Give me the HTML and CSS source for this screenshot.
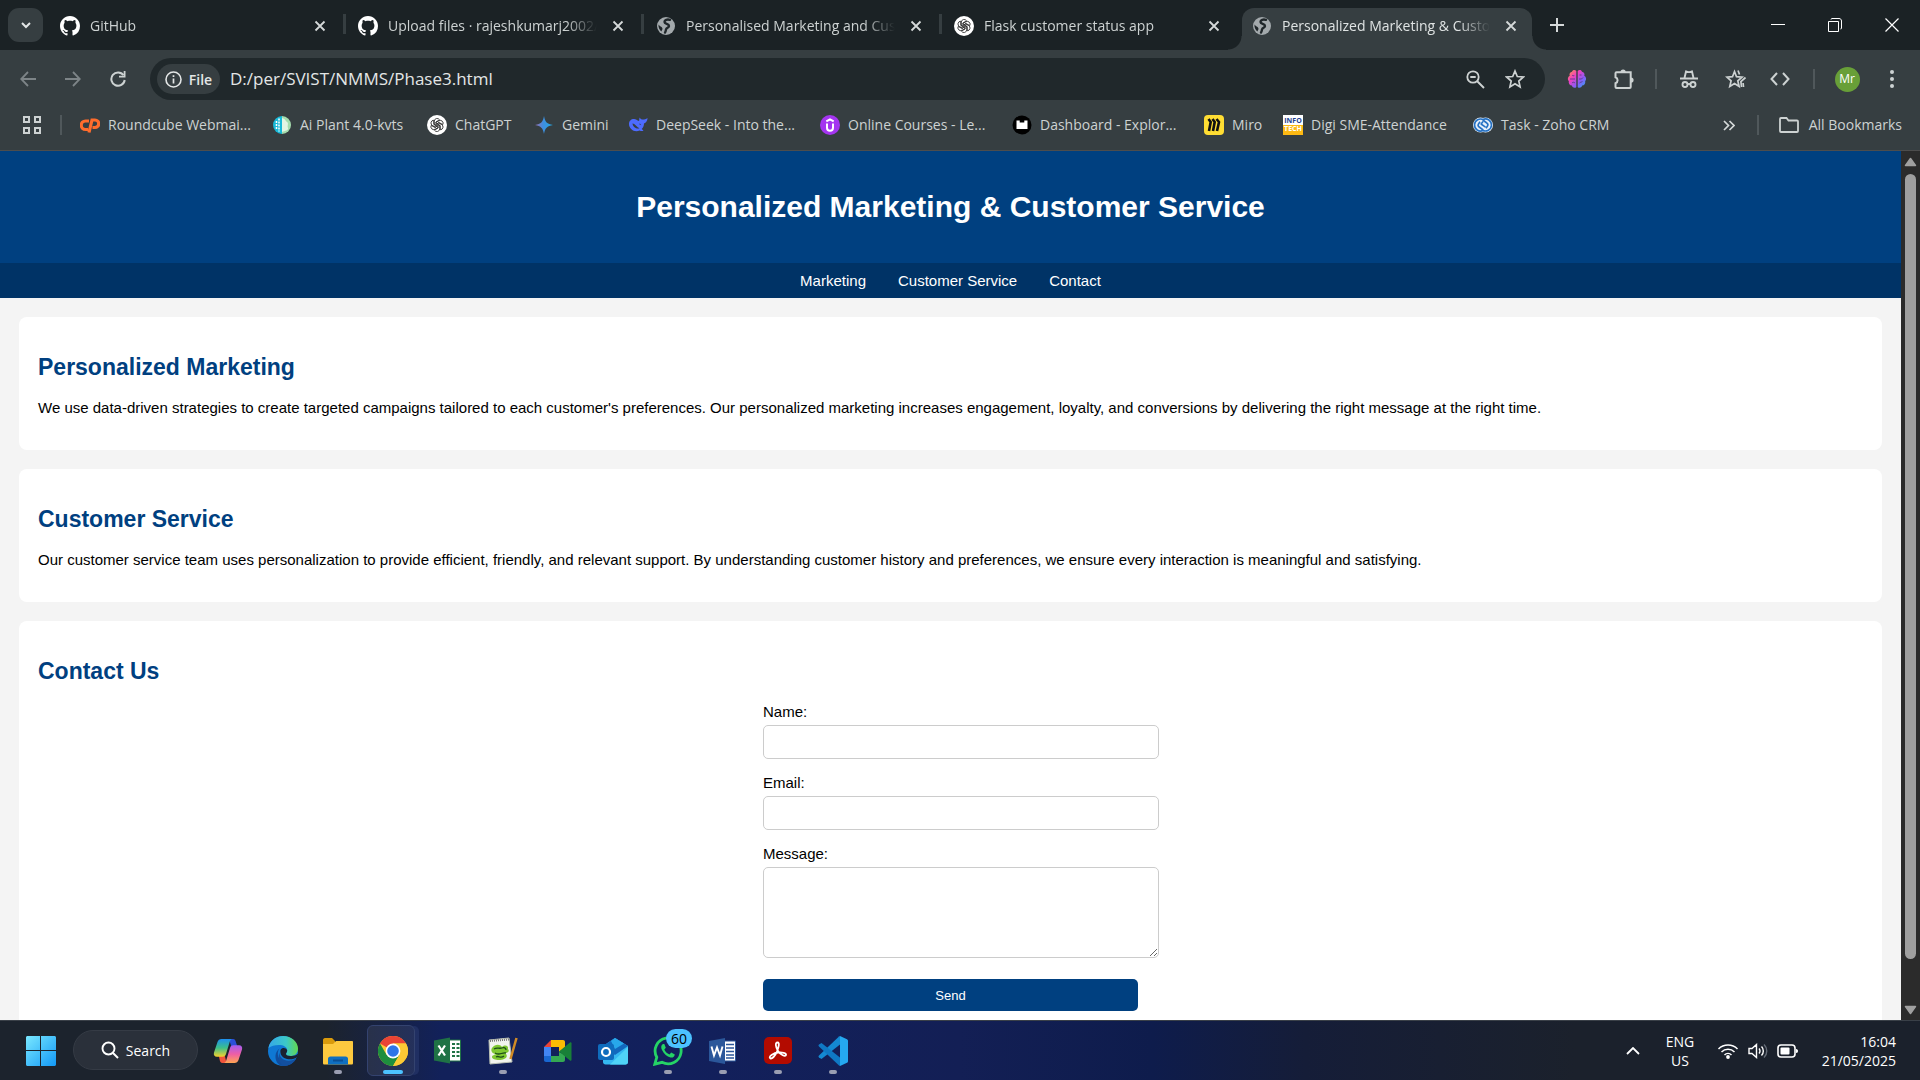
FILE: index.html
```html
<!DOCTYPE html>
<html lang="en">
<head>
<meta charset="utf-8">
<title>Personalized Marketing &amp; Customer Service</title>
<link rel="stylesheet" href="styles.css">
</head>
<body>
<svg class="defs" aria-hidden="true">
  <defs>
    <symbol id="github" viewBox="0 0 16 16"><path fill="#fff" d="M8 0C3.58 0 0 3.58 0 8c0 3.54 2.29 6.53 5.47 7.59.4.07.55-.17.55-.38 0-.19-.01-.82-.01-1.49-2.01.37-2.53-.49-2.69-.94-.09-.23-.48-.94-.82-1.13-.28-.15-.68-.52-.01-.53.63-.01 1.08.58 1.23.82.72 1.21 1.87.87 2.33.66.07-.52.28-.87.51-1.07-1.78-.2-3.64-.89-3.64-3.95 0-.87.31-1.59.82-2.15-.08-.2-.36-1.02.08-2.12 0 0 .67-.21 2.2.82.64-.18 1.32-.27 2-.27s1.36.09 2 .27c1.53-1.04 2.2-.82 2.2-.82.44 1.1.16 1.92.08 2.12.51.56.82 1.27.82 2.15 0 3.07-1.87 3.75-3.65 3.95.29.25.54.73.54 1.48 0 1.07-.01 1.93-.01 2.2 0 .21.15.46.55.38A8.01 8.01 0 0 0 16 8c0-4.42-3.58-8-8-8z"/></symbol>
    <symbol id="globe" viewBox="0 0 20 20"><circle cx="10" cy="10" r="9" fill="#a3a9ac"/><path fill="none" stroke="#20272a" stroke-width="2.400" stroke-linecap="round" d="M14 3.800c-3-.8-5.500.2-5.500 2.200 0 2.300 4.500 1.500 4.500 4 0 2-2.500 1.500-3 3.500-.3 1.200-.2 2-1 3"/><path fill="#20272a" d="M2.500 8.500c-.3 3 1 5.500 3 7 .2-1.500 1.500-2 .8-3.500C5.500 10.500 4 10.500 2.500 8.500z"/></symbol>
    <symbol id="openai" viewBox="0 0 20 20"><circle cx="10" cy="10" r="10" fill="#fff"/><g fill="none" stroke="#222" stroke-width=".8"><path d="M7.300 10.300V6.200a2.800 2.800 0 0 1 5.200-1.400L9 6.900v4.400"/><path d="M7.300 10.300V6.200a2.800 2.800 0 0 1 5.200-1.400L9 6.900v4.400" transform="rotate(60 10 10)"/><path d="M7.300 10.300V6.200a2.800 2.800 0 0 1 5.200-1.400L9 6.900v4.400" transform="rotate(120 10 10)"/><path d="M7.300 10.300V6.200a2.800 2.800 0 0 1 5.200-1.400L9 6.900v4.400" transform="rotate(180 10 10)"/><path d="M7.300 10.300V6.200a2.800 2.800 0 0 1 5.200-1.400L9 6.900v4.400" transform="rotate(240 10 10)"/><path d="M7.300 10.300V6.200a2.800 2.800 0 0 1 5.200-1.400L9 6.900v4.400" transform="rotate(300 10 10)"/></g></symbol>
    <symbol id="x" viewBox="0 0 12 12"><path d="M1.500 1.500l9 9M10.500 1.500l-9 9" stroke="currentColor" stroke-width="1.800"/></symbol>
  </defs>
</svg>

<header class="browser">
  <div class="tabstrip">
    <button class="tab-search" aria-label="Search tabs"><svg width="12" height="12" viewBox="0 0 12 12"><path d="M2 4l4 4 4-4" fill="none" stroke="#e3e6e6" stroke-width="2"/></svg></button>
    <div class="tabs">
      <div class="tab"><svg class="fav"><use href="#github"/></svg><span class="tab-title">GitHub</span><button class="close" aria-label="Close tab"><svg><use href="#x"/></svg></button></div>
      <div class="tab divided"><svg class="fav"><use href="#github"/></svg><span class="tab-title">Upload files · rajeshkumarj2002/</span><button class="close" aria-label="Close tab"><svg><use href="#x"/></svg></button></div>
      <div class="tab divided"><svg class="fav"><use href="#globe"/></svg><span class="tab-title">Personalised Marketing and Cus</span><button class="close" aria-label="Close tab"><svg><use href="#x"/></svg></button></div>
      <div class="tab divided"><svg class="fav"><use href="#openai"/></svg><span class="tab-title">Flask customer status app</span><button class="close" aria-label="Close tab"><svg><use href="#x"/></svg></button></div>
      <div class="tab active"><svg class="fav"><use href="#globe"/></svg><span class="tab-title">Personalized Marketing &amp; Custo</span><button class="close" aria-label="Close tab"><svg><use href="#x"/></svg></button></div>
    </div>
    <button class="new-tab" aria-label="New tab"><svg width="14" height="14" viewBox="0 0 14 14"><path d="M7 0v14M0 7h14" stroke="#d5d9d9" stroke-width="2"/></svg></button>
    <div class="window-controls">
      <button aria-label="Minimize"><svg width="14" height="14" viewBox="0 0 14 14"><path d="M0 6.500h14" stroke="#fff"/></svg></button>
      <button aria-label="Restore"><svg width="14" height="14" viewBox="0 0 14 14"><path d="M.5 3.500h10v10H.5zM3 1.500c0-.6.500-1 1-1h7c1.500 0 2.500 1 2.500 2.500v7c0 .8-.4 1-1 1" fill="none" stroke="#fff"/></svg></button>
      <button aria-label="Close"><svg width="14" height="14" viewBox="0 0 14 14"><path d="M.5.5l13 13M13.500.5l-13 13" stroke="#fff" stroke-width="1.200"/></svg></button>
    </div>
  </div>

  <div class="toolbar">
    <div class="nav-buttons">
      <button aria-label="Back"><svg width="16" height="16" viewBox="0 0 16 16"><path d="M16 8H1.500M8 1L1.200 8 8 15" fill="none" stroke="#7d8487" stroke-width="1.800"/></svg></button>
      <button aria-label="Forward"><svg width="16" height="16" viewBox="0 0 16 16"><path d="M0 8h14.500M8 1l6.800 7L8 15" fill="none" stroke="#7d8487" stroke-width="1.800"/></svg></button>
      <button aria-label="Reload"><svg width="16" height="16" viewBox="0 0 16 16"><path d="M13.500 4.200A6.700 6.700 0 1 0 14.700 9" fill="none" stroke="#cdd2d2" stroke-width="2"/><path d="M15.500 0v6.500H9V4.700h4.700V0z" fill="#cdd2d2"/></svg></button>
    </div>
    <div class="omnibox">
      <button class="chip"><svg width="17" height="17" viewBox="0 0 17 17"><circle cx="8.500" cy="8.500" r="7.500" fill="none" stroke="#e3e6e6" stroke-width="1.600"/><path d="M8.500 7.500v5M8.500 4.200v1.800" stroke="#e3e6e6" stroke-width="1.700"/></svg>File</button>
      <input class="url" aria-label="Address" value="D:/per/SVIST/NMMS/Phase3.html">
      <button class="omni-btn" aria-label="Zoom"><svg width="19" height="19" viewBox="0 0 19 19"><circle cx="7" cy="7" r="5.700" fill="none" stroke="#cdd2d2" stroke-width="1.800"/><path d="M11 11l7 7M4.300 7h5.400" stroke="#cdd2d2" stroke-width="1.900"/></svg></button>
      <button class="omni-btn" aria-label="Bookmark this tab"><svg width="20" height="20" viewBox="0 0 20 20"><path d="M10 2l2.300 5.500 6 .5-4.500 4 1.300 5.900L10 14.800l-5.100 3.100L6.200 12 1.700 8l6-.5z" fill="none" stroke="#cdd2d2" stroke-width="1.700"/></svg></button>
    </div>
    <div class="extensions">
      <button aria-label="Brain extension"><svg width="20" height="20" viewBox="0 0 20 20"><defs><linearGradient id="bg" x1="0" y1="0" x2="1" y2="1"><stop offset="0" stop-color="#ff9d3c"/><stop offset=".35" stop-color="#f03fc0"/><stop offset=".65" stop-color="#8a5cf6"/><stop offset="1" stop-color="#27a9f5"/></linearGradient></defs><g fill="url(#bg)"><path d="M9.300 2C8 .3 5.500.8 5 2.800 3 3 2 5 2.700 6.700.8 7.500.3 10.500 1.800 12c-.5 2.500 1 4.500 3 4.600C5.500 19 8.300 19.500 9.300 18zM10.700 2C12 .3 14.500.8 15 2.800c2 .2 3 2.200 2.300 3.900 1.900.8 2.400 3.800.9 5.300.5 2.500-1 4.500-3 4.600-.7 2.400-3.500 2.900-4.500 1.400z"/></g><path d="M3 10h5M5 6c1 1.200 2 .8 2.500 0M5 14c1-1.200 2-.8 3 0M12 10h2.500l1.500-1.500M12.500 6h2M12.500 14c1-1 2-.8 3-1.500" fill="none" stroke="#4a3a80" stroke-width=".8"/></svg></button>
      <button aria-label="Extensions"><svg width="22" height="22" viewBox="0 0 22 22"><path d="M2.500 5.200c0-.6.400-1 1-1h14.200V19c0 .6-.4 1-1 1H3.500c-.6 0-1-.4-1-1v-3.800a3.200 3.200 0 0 0 0-6z" fill="none" stroke="#cdd2d2" stroke-width="2"/><path d="M7.500 4a2.600 2.600 0 0 1 5.200 0zM18 9.500a2.600 2.600 0 0 1 0 5.200z" fill="#cdd2d2"/></svg></button>
      <i class="sep"></i>
      <button aria-label="Incognito"><svg width="20" height="20" viewBox="0 0 20 20" fill="none" stroke="#cdd2d2" stroke-width="1.900"><path d="M1 9.500h18M5.500 9L7 2.500c2 .8 4 .8 6 0L14.500 9"/><circle cx="6" cy="15.500" r="2.500"/><circle cx="14" cy="15.500" r="2.500"/><path d="M8.500 15h3"/></svg></button>
      <button aria-label="Favourites"><svg width="22" height="22" viewBox="0 0 22 22" fill="none" stroke="#cdd2d2" stroke-width="1.700"><path d="M9.500 3.500l2 5.200 5.500.4-4.200 3.700 1.300 5.700-4.600-3-4.700 3 1.300-5.700L2 9.100l5.500-.4zM13 2.500l1.500 4M16.500 19l-.6-5.500L20.500 9.500"/><path d="M18.500 19l-.4-4"/></svg></button>
      <button aria-label="Source"><svg width="20" height="14" viewBox="0 0 20 14"><path d="M7 1L1.500 7 7 13M13 1l5.500 6-5.500 6" fill="none" stroke="#cdd2d2" stroke-width="2"/></svg></button>
      <i class="sep"></i>
      <button aria-label="Profile"><span class="avatar">Mr</span></button>
      <button aria-label="Menu"><svg width="4" height="18" viewBox="0 0 4 18" fill="#cdd2d2"><circle cx="2" cy="2" r="2"/><circle cx="2" cy="9" r="2"/><circle cx="2" cy="16" r="2"/></svg></button>
    </div>
  </div>

  <nav class="bookmarks" aria-label="Bookmarks">
    <button class="apps" aria-label="Apps"><svg width="18" height="18" viewBox="0 0 18 18" fill="none" stroke="#cdd2d2" stroke-width="2"><path d="M1 1h5v5H1zM12 1h5v5h-5zM1 12h5v5H1zM12 12h5v5h-5z"/></svg></button>
    <i class="sep"></i>
    <div class="links">
      <a href="#"><svg viewBox="0 0 20 20" fill="none" stroke="#ff6c2c" stroke-width="3.200"><path d="M9 6H5.500a4 4 0 0 0 0 8.500H8M9 17.500L12 5h3a3.500 3.500 0 0 1 0 7.500h-2.500"/></svg>Roundcube Webmai...</a>
      <a href="#"><svg viewBox="0 0 20 20"><path d="M10 1a9 9 0 0 0 0 18z" fill="#18b9d8"/><path d="M10 1a9 9 0 0 1 0 18z" fill="#a5dcae"/><path d="M7 3.500v13M4.500 6v8" stroke="#fff" stroke-width="1.500" stroke-dasharray="2 1"/><path d="M10 3c4 1 3 3 5 4s0 4 1 6-3 3-6 4z" fill="#e3f5e4"/></svg>Ai Plant 4.0-kvts</a>
      <a href="#"><svg><use href="#openai"/></svg>ChatGPT</a>
      <a href="#"><svg viewBox="0 0 20 20"><defs><linearGradient id="gem" x1="0" x2="1"><stop offset="0" stop-color="#9a6fb0"/><stop offset=".45" stop-color="#3f8ee0"/><stop offset="1" stop-color="#23a8e0"/></linearGradient></defs><path d="M10 1c1 6 3 8 9 9-6 1-8 3-9 9-1-6-3-8-9-9 6-1 8-3 9-9z" fill="url(#gem)"/></svg>Gemini</a>
      <a href="#"><svg viewBox="0 0 20 20"><path d="M1 9c0-3 2-5 5-5 2 0 3 1.500 5 2 .5-1 0-2 .7-3.500.7 1.500 1.800 2 3 2C16.500 4.500 18 4 19.500 3c0 3-1.500 4.800-3.500 5.500 0 2.500-1 4.500-2.300 5.500l1.800 1.500c-1 .8-2.500.8-3.800 0C6.500 18 1 14 1 9z" fill="#4d6bfe"/><path d="M4.500 8.500c3 .2 4.500 4 7 4.700-2.500 1-6.500-.7-7-4.700zM11 9c1-.5 2 .3 2.200 1.300" fill="#363e41"/></svg>DeepSeek - Into the...</a>
      <a href="#"><svg viewBox="0 0 20 20"><circle cx="10" cy="10" r="10" fill="#a435f0"/><path d="M7 8.500v4.200a3 3 0 0 0 6 0V8.500M6.300 6.300L10 4.300l3.700 2" fill="none" stroke="#fff" stroke-width="2"/></svg>Online Courses - Le...</a>
      <a href="#"><svg viewBox="0 0 20 20"><circle cx="10" cy="10" r="9.500" fill="#000"/><path d="M4.500 5.500h3.200v2h4.600v-2h3.200v8.500h-11z" fill="#fff"/></svg>Dashboard - Explor...</a>
      <a href="#"><svg viewBox="0 0 20 20"><rect width="20" height="20" rx="4" fill="#ffdd33"/><path d="M4.500 4l2.200 3L5 16M8.500 4l2.200 3L9 16M12.500 4l2.500 3-2 9" fill="none" stroke="#111" stroke-width="2.600"/></svg>Miro</a>
      <a href="#"><svg viewBox="0 0 20 20"><path fill="#fff" d="M0 0h20v10H0z"/><path fill="#fdb913" d="M0 10h20v10H0z"/><text x="10" y="8" class="logo-info">INFO</text><text x="10" y="16" class="logo-tech">TECH</text></svg>Digi SME-Attendance</a>
      <a href="#"><svg viewBox="0 0 20 20"><circle cx="7.500" cy="10" r="7.500" fill="#e8f1fa"/><circle cx="12.500" cy="10" r="7.500" fill="#e8f1fa"/><g fill="none" stroke="#2672c4" stroke-width="1.600"><path d="M10.500 4.800A6 6 0 1 0 10 15.500M9.500 15.200A6 6 0 1 0 10 4.500"/><path d="M7 6.800L5.500 9c-.8 1.200-.3 2.300.7 3l4 3M13 13.200l1.500-2.200c.8-1.200.3-2.300-.7-3l-4-3M8 9l4.500 3.200M7.800 9.500L10 6.500"/></g></svg>Task - Zoho CRM</a>
    </div>
    <button class="more" aria-label="More bookmarks"><svg width="12" height="11" viewBox="0 0 12 11"><path d="M1 1l4.500 4.500L1 10M6.500 1L11 5.500 6.500 10" fill="none" stroke="#d5d9d9" stroke-width="1.700"/></svg></button>
    <i class="sep"></i>
    <a class="all" href="#"><svg width="20" height="16" viewBox="0 0 20 16"><path d="M1 14V2c0-.6.400-1 1-1h5.500l2 2.500H18c.6 0 1 .4 1 1V14c0 .6-.4 1-1 1H2c-.6 0-1-.4-1-1z" fill="none" stroke="#cdd2d2" stroke-width="1.800"/></svg>All Bookmarks</a>
  </nav>
</header>

<div class="viewport">
  <div class="page">
    <header class="page-header"><h1>Personalized Marketing &amp; Customer Service</h1></header>
    <nav class="page-nav">
      <a href="#marketing">Marketing</a>
      <a href="#service">Customer Service</a>
      <a href="#contact">Contact</a>
    </nav>
    <main>
      <section id="marketing">
        <h2>Personalized Marketing</h2>
        <p>We use data-driven strategies to create targeted campaigns tailored to each customer's preferences. Our personalized marketing increases engagement, loyalty, and conversions by delivering the right message at the right time.</p>
      </section>
      <section id="service">
        <h2>Customer Service</h2>
        <p>Our customer service team uses personalization to provide efficient, friendly, and relevant support. By understanding customer history and preferences, we ensure every interaction is meaningful and satisfying.</p>
      </section>
      <section id="contact">
        <h2>Contact Us</h2>
        <form>
          <label for="name">Name:</label>
          <input id="name" type="text">
          <label for="email">Email:</label>
          <input id="email" type="email">
          <label for="message">Message:</label>
          <textarea id="message"></textarea>
          <button type="button">Send</button>
        </form>
      </section>
    </main>
  </div>
  <div class="scrollbar" aria-hidden="true">
    <svg width="13" height="10" viewBox="0 0 13 10"><path d="M6.500 1.500l5 7h-10z" fill="#a0a0a0" stroke="#a0a0a0" stroke-width="1.500" stroke-linejoin="round"/></svg>
    <div class="thumb"></div>
    <svg width="13" height="10" viewBox="0 0 13 10"><path d="M6.500 8.500l5-7h-10z" fill="#a0a0a0" stroke="#a0a0a0" stroke-width="1.500" stroke-linejoin="round"/></svg>
  </div>
</div>

<footer class="taskbar">
  <button class="start" aria-label="Start"><svg width="30" height="30" viewBox="0 0 30 30"><defs><linearGradient id="win" x1="0" y1="0" x2="1" y2="1" gradientUnits="objectBoundingBox"><stop offset="0" stop-color="#7ae8ff"/><stop offset="1" stop-color="#1298f6"/></linearGradient></defs><path fill="url(#win)" d="M1.500 0H14v14H0V1.500C0 .7.700 0 1.500 0zM15 0h13.500c.8 0 1.500.7 1.500 1.500V14H15zM0 15h14v15H1.500C.7 30 0 29.300 0 28.500zM15 15h15v13.500c0 .8-.7 1.500-1.500 1.500H15z"/></svg></button>
  <button class="search"><svg width="18" height="18" viewBox="0 0 18 18"><circle cx="7.500" cy="7.500" r="6" fill="none" stroke="#fff" stroke-width="1.900"/><path d="M12 12l5 5" stroke="#fff" stroke-width="2"/></svg>Search</button>
  <div class="pinned">
    <button aria-label="Copilot"><svg viewBox="0 0 30 30"><defs><linearGradient id="cp1" x1="0" y1="0" x2="0" y2="1"><stop offset="0" stop-color="#1d8ff0"/><stop offset=".5" stop-color="#3cc08a"/><stop offset="1" stop-color="#f5d02c"/></linearGradient><linearGradient id="cp2" x1="0" y1="0" x2="0" y2="1"><stop offset="0" stop-color="#a35df0"/><stop offset=".5" stop-color="#ee5ea5"/><stop offset="1" stop-color="#ffa552"/></linearGradient></defs><path d="M16 3h4c2 0 2.500 1.500 3.200 4l1 3h-6z" fill="#2b4fd8"/><path d="M13.500 27h-4c-2 0-2.500-1.500-3-4l-.6-3h6z" fill="#f0543c"/><path d="M8.500 3H19c-1.500.5-2 1.500-2.500 3.500L13 18c-.6 2-1.500 2.700-3.500 2.700H4C1.500 20.700.3 19 1 16.500L4.500 6C5.200 4 6.500 3 8.500 3z" fill="url(#cp1)"/><path d="M21.500 27H11c1.500-.5 2-1.500 2.500-3.500L17 12c.6-2 1.500-2.700 3.500-2.700H26c2.500 0 3.700 1.700 3 4.200L25.500 24c-.7 2-2 3-4 3z" fill="url(#cp2)"/></svg></button>
    <button aria-label="Edge"><svg viewBox="0 0 30 30"><defs><linearGradient id="ed" x1="0" x2="1"><stop offset="0" stop-color="#35a8e8"/><stop offset=".6" stop-color="#3cc8c8"/><stop offset="1" stop-color="#62d84e"/></linearGradient></defs><circle cx="15" cy="15" r="15" fill="#0f78d4"/><path d="M.5 12C1.500 5 7.500 0 15 0c8.500 0 15 6 15 12.500 0 5-3.500 7.500-7.500 7.500-3 0-4.500-1-4.500-2 0-1 1.200-1.700 1.200-3.700C19.200 11 15.500 9 11 9 6.500 9 3 10 .5 12z" fill="url(#ed)"/><path d="M11.500 12.500C8 17 10 25 17 26.500c4 .9 8-.5 11.200-4C26 27 21 30 15.500 30 9.500 30 7 24 7.500 19.500c.3-3 2-5.500 4-7z" fill="#104c9c"/><path d="M12.500 14c-.8 4.500 2 8 6.500 9 4 .9 7.500-.3 10.300-2l1-3.500c-2 2-4.800 2.700-7.800 2.500-3 0-4.500-1-4.500-2 0-1 1.200-1.700 1.200-3.700-1.500-2.800-5-3-6.700-.3z" fill="#1a2130"/><path d="M11.500 16.500C11.300 23 19 27.500 28.200 22.500 26 27 21 30 15.500 30c-4-2.500-5.800-8.500-4-13.500z" fill="#124f9f"/></svg></button>
    <button aria-label="File Explorer"><svg viewBox="0 0 30 30"><path d="M0 4c0-1 .7-2 2-2h7l3 3v5H0z" fill="#d99a0c"/><path d="M0 8h10l3-3h16c.7 0 1 .5 1 1v21c0 1-.5 1.500-1.500 1.500h-27C.5 28.500 0 28 0 27z" fill="#fdc93f"/><path d="M5 28.500V23c0-1.500.8-2.500 2.500-2.500h15c1.700 0 2.500 1 2.500 2.500v5.500z" fill="#0f6fc0"/><path d="M10 24.500h10" stroke="#0a4f94" stroke-width="2"/></svg><i class="dot"></i></button>
    <button class="running" aria-label="Chrome"><svg viewBox="0 0 30 30"><circle cx="15" cy="15" r="15" fill="#fcc934"/><path d="M15 15L2 7.500A15 15 0 0 1 28 7.500H15z" fill="#ea4335"/><path d="M2 7.500A15 15 0 0 0 15 30l6.500-11.300L15 15l-6.500 3.700z" fill="#1e8e3e"/><path d="M15 7.500h13A15 15 0 0 1 15 30l6.500-11.300z" fill="#fcc934"/><circle cx="15" cy="15" r="7.400" fill="#fff"/><circle cx="15" cy="15" r="5.800" fill="#2f75e8"/></svg><i class="dot live"></i></button>
    <button aria-label="Excel"><svg viewBox="0 0 30 30"><path d="M15 4h12.500v21H15z" fill="#fff" stroke="#1f7245"/><path d="M19 8h3M23.500 8h3M19 12h3M23.500 12h3M19 16h3M23.500 16h3M19 20h3M23.500 20h3" stroke="#1f7245" stroke-width="2"/><path d="M1 4.500L17 1.500v26L1 24.500z" fill="#1f7245"/><path d="M5.500 9.500l6.500 10M12 9.500l-6.500 10" stroke="#fff" stroke-width="2.200"/></svg></button>
    <button aria-label="Notepad++"><svg viewBox="0 0 30 30"><path d="M1 4l20-2 3 24-22 2z" fill="#f2f4ee" stroke="#b9bfb2"/><path d="M2 5l19-1.500" stroke="#777" stroke-width="2" stroke-dasharray="1 1"/><path d="M4 12c3-4 8-4 10-1 3-3 7-1 6 2 2 2 0 4-3 4 3 2 2 5-1 6-4 2-12 1-12-2 0-2 3-2 4-3-3 0-6-3-4-6z" fill="#7fc832"/><path d="M6 13c3-2 5 0 8-1M14 12c2-1 4 0 4 2M7 17c4 3 7-1 11 0M8 21c3-2 4 2 8-1" fill="none" stroke="#1d4d18" stroke-width="1.300"/><path d="M28.500 2l-6 21" stroke="#d08a26" stroke-width="2.500"/></svg><i class="dot"></i></button>
    <button aria-label="Meet"><svg viewBox="0 0 30 30"><path d="M1 11l7-7v7z" fill="#ea4335"/><path d="M1 11h7v9H1z" fill="#4285f4"/><path d="M1 20h7v6H3c-1.200 0-2-.8-2-2z" fill="#1967d2"/><path d="M8 4h12c1.200 0 2 .8 2 2v5.500L16 16v-5H8z" fill="#fbbc04"/><path d="M8 26v-6h8v-4l6 3v5c0 1.200-.8 2-2 2z" fill="#34a853"/><path d="M16 15.500L27 6.500c.8-.6 1.500-.2 1.500.8v16.400c0 1-.7 1.400-1.500.8z" fill="#188038"/></svg></button>
    <button aria-label="Outlook"><svg viewBox="0 0 30 30"><path d="M5 10L17 2l13 8v16c0 1.500-1 2.500-2.500 2.500h-20C6 28.500 5 27.500 5 26z" fill="#35b8f1"/><path d="M5 10L17 2l13 8-13 9z" fill="#1268bd"/><path d="M13 5l4-3 9 5.500-9 5.500z" fill="#28a8ea"/><path d="M30 11v15c0 1.500-1 2.500-2.500 2.500H12z" fill="#4fd3f7"/><rect y="8" width="16" height="16" rx="2" fill="#0f6cbd"/><circle cx="8" cy="16" r="4" fill="none" stroke="#fff" stroke-width="2.200"/></svg></button>
    <button aria-label="WhatsApp"><svg viewBox="0 0 30 30"><path d="M1.800 28.200l2-7A13 13 0 1 1 9 26.300z" fill="none" stroke="#25d366" stroke-width="2.800"/><path d="M10 8c-2 1.200-2.300 3.500-1 6 2 4 5 6.500 8.500 7.500 2.200.5 4-.6 4.300-3l-3.600-2-1.700 2c-2.500-1-4.300-2.800-5.200-5l1.500-1.700L11.300 8z" fill="#25d366"/></svg><span class="badge">60</span><i class="dot"></i></button>
    <button aria-label="Word"><svg viewBox="0 0 30 30"><path d="M15 5h12.500v20H15z" fill="#fff" stroke="#2b579a"/><path d="M18 8.500h8M18 12h8M18 15.500h8M18 19h8M18 22h8" stroke="#2b579a" stroke-width="1.500"/><path d="M1 5l16-3v26L1 25z" fill="#2b579a"/><path d="M3.500 10.500L6 19.500l3-8 3 8 2.500-9" fill="none" stroke="#fff" stroke-width="1.900"/></svg><i class="dot"></i></button>
    <button aria-label="Acrobat"><svg viewBox="0 0 30 30"><rect x="1" y="1" width="28" height="27" rx="5" fill="#b30b00"/><path d="M7 22c-1.500-2 4-5 8-5.500s8.500.5 8 2.500-5.500 0-8-4S12 6.500 14.500 6.500s1 5-.5 9-5.500 8.500-7 6.500z" fill="none" stroke="#fff" stroke-width="1.800"/></svg><i class="dot"></i></button>
    <button aria-label="Visual Studio Code"><svg viewBox="0 0 30 30"><path d="M22 0l7 3.200c.7.400 1 .8 1 1.500v20.600c0 .7-.3 1.200-1 1.500L22 30z" fill="#25a8f0"/><path d="M22 0v8.500L3.500 23 1 21.500c-.7-.6-.7-1.300 0-2L21 .5z" fill="#1489d2"/><path d="M22 30v-8.500L3.500 7 1 8.500c-.7.600-.7 1.300 0 2L21 29.500z" fill="#0f78c4"/></svg><i class="dot"></i></button>
  </div>
  <div class="tray">
    <button aria-label="Show hidden icons"><svg width="14" height="8" viewBox="0 0 14 8"><path d="M1 7l6-6 6 6" fill="none" stroke="#fff" stroke-width="1.800"/></svg></button>
    <button class="lang">ENG<br>US</button>
    <button class="status" aria-label="Network, volume, battery">
      <svg width="22" height="16" viewBox="0 0 22 16"><g fill="none" stroke="#fff" stroke-width="1.500"><path d="M1.500 6a13.500 13.500 0 0 1 19 0M4.500 9a9.200 9.200 0 0 1 13 0M7.500 12a5 5 0 0 1 7 0"/></g><circle cx="11" cy="14" r="1.900" fill="#fff"/></svg>
      <svg width="20" height="16" viewBox="0 0 20 16" fill="none" stroke="#fff" stroke-width="1.400"><path d="M1 5.500h3L8.500 1.500v13L4 10.500H1zM11 5.500a4 4 0 0 1 0 5M13.500 3.500a6.500 6.500 0 0 1 0 9"/><path d="M16 1.500a9 9 0 0 1 0 13" stroke="#666d78"/></svg>
      <svg width="22" height="14" viewBox="0 0 22 14"><rect x="1" y="1" width="17" height="12" rx="3" fill="none" stroke="#fff" stroke-width="1.600"/><rect x="3.500" y="3.500" width="9" height="7" rx="1" fill="#fff"/><path d="M19 5c1.500 0 2 1 2 2s-.5 2-2 2z" fill="#fff"/></svg>
    </button>
    <button class="clock">16:04<br>21/05/2025</button>
  </div>
</footer>
</body>
</html>
```
FILE: styles.css
```css
* { box-sizing: border-box; }

body {
  margin: 0;
  height: 100vh;
  display: flex;
  flex-direction: column;
  overflow: hidden;
  font-family: "Liberation Sans", Arial, sans-serif;
  font-size: 15px;
  line-height: 17px;
  color: #000;
}

.defs { position: absolute; width: 0; height: 0; }

button { font-family: inherit; }

/* Browser window */
.browser {
  flex: none;
  background: #363e41;
  border-bottom: 1px solid #4d4d4d;
  color: #cdd2d2;
  font-family: "Open Sans", "Segoe UI", sans-serif;
  font-size: 14px;
  line-height: 20px;
}

.browser button,
.taskbar button {
  display: flex;
  align-items: center;
  justify-content: center;
  padding: 0;
  border: 0;
  background: none;
  color: inherit;
}

.tabstrip {
  display: flex;
  height: 50px;
  background: #1b2225;
}

.browser .tab-search {
  width: 35px;
  height: 34px;
  margin: 8px 7px 0 8px;
  border-radius: 11px;
  background: #363e41;
}

.tabs {
  display: grid;
  grid-template-columns: repeat(4, 298px) 290px;
}

.tab {
  position: relative;
  display: flex;
  align-items: center;
  height: 42px;
  margin-top: 8px;
  padding: 0 10px 7px;
  gap: 10px;
}

.fav { flex: none; width: 20px; height: 20px; }

.tab-title {
  flex: 1;
  min-width: 0;
  overflow: hidden;
  white-space: nowrap;
  -webkit-mask-image: linear-gradient(to right, #000 85%, transparent);
  mask-image: linear-gradient(to right, #000 85%, transparent);
}

.browser .close { width: 22px; height: 22px; }
.tab:not(.active) .close { margin-right: 7px; }
.close svg { width: 12px; height: 12px; color: #d5d9d9; }

.divided::before {
  content: "";
  position: absolute;
  left: -5px;
  top: 6px;
  width: 3px;
  height: 20px;
  background: #363e41;
}

.active {
  background: #363e41;
  border-radius: 12px 12px 0 0;
  color: #dfe3e3;
}
.active::before,
.active::after {
  content: "";
  position: absolute;
  bottom: 0;
  width: 14px;
  height: 14px;
}
.active::before { left: -14px; background: radial-gradient(circle at 0 0, transparent 13px, #363e41 14px); }
.active::after { right: -14px; background: radial-gradient(circle at 100% 0, transparent 13px, #363e41 14px); }

.browser .new-tab { width: 50px; }

.window-controls {
  display: grid;
  grid-template-columns: repeat(3, 57px);
  margin-left: auto;
}

.toolbar {
  display: flex;
  align-items: center;
  height: 58px;
}

.nav-buttons {
  display: grid;
  grid-template-columns: repeat(3, 45px);
  padding: 0 10px 0 5px;
}

.omnibox {
  flex: 1;
  display: flex;
  align-items: center;
  height: 42px;
  padding: 0 10px 0 7px;
  border-radius: 21px;
  background: #20282b;
}

.browser .chip {
  width: 63px;
  height: 30px;
  gap: 7px;
  border-radius: 15px;
  background: #363e41;
  color: #e3e6e6;
  font-size: 14px;
  font-weight: 600;
}

.url {
  flex: 1;
  height: 30px;
  padding: 0 10px;
  border: 0;
  background: none;
  color: #e3e6e6;
  font: 17px/30px "Open Sans", "Segoe UI", sans-serif;
}

.browser .omni-btn { width: 40px; }

.extensions {
  display: grid;
  grid-template-columns: 46px 48px 16px 50px 44px 44px 24px 42px 48px;
  align-items: center;
  justify-items: center;
  padding: 0 4px 0 9px;
}

.sep { width: 2px; height: 20px; background: #50585b; }

.avatar {
  width: 25px;
  height: 25px;
  border-radius: 50%;
  background: #689f38;
  color: #fff;
  font-size: 12px;
  line-height: 24px;
}

.bookmarks {
  display: flex;
  align-items: center;
  height: 42px;
  padding-bottom: 8px;
}

.browser .apps { width: 38px; margin: 0 9px 0 13px; }

.links {
  flex: 1;
  display: grid;
  grid-template-columns: 192px 155px 107px 94px 192px 192px 192px 79px 190px 160px;
  margin-left: 18px;
}

.links a,
.all {
  display: flex;
  align-items: center;
  gap: 8px;
  color: inherit;
  text-decoration: none;
  white-space: nowrap;
}
.links svg { flex: none; width: 20px; height: 20px; }

.logo-info,
.logo-tech { font-size: 7px; font-weight: 700; text-anchor: middle; fill: #23408f; }
.logo-tech { fill: #fff; }

.browser .more { width: 40px; margin-right: 8px; }
.all { margin: 0 18px 0 20px; gap: 10px; }

/* Web page */
.viewport {
  flex: 1;
  min-height: 0;
  display: flex;
  background: #f4f4f4;
}

.page { flex: 1; overflow: hidden; }

.page-header {
  padding: 19px;
  background: #004080;
  color: #fff;
  text-align: center;
}

h1 { margin: 20px 0; font-size: 30px; line-height: 34px; }

.page-nav {
  display: flex;
  justify-content: center;
  gap: 32px;
  padding: 9px;
  background: #003366;
}
.page-nav a { color: #fff; text-decoration: none; }

main {
  display: flex;
  flex-direction: column;
  gap: 19px;
  padding: 19px;
}

section {
  padding: 19px;
  border-radius: 8px;
  background: #fff;
}

h2 { margin: 18px 0 19px; font-size: 23px; line-height: 26px; color: #004080; }
p { margin: 15px 0; }

form {
  display: flex;
  flex-direction: column;
  width: 375px;
  margin: 0 auto;
}

label { margin-bottom: 5px; }

form input,
textarea {
  width: 396px;
  height: 34px;
  margin: 0 0 15px;
  padding: 9px;
  border: 1px solid #ccc;
  border-radius: 5px;
  background: #fff;
}

textarea { height: 91px; margin-bottom: 21px; }

form button {
  height: 32px;
  border: 0;
  border-radius: 5px;
  background: #004080;
  color: #fff;
  font-size: 13px;
}

.scrollbar {
  display: flex;
  flex-direction: column;
  align-items: center;
  justify-content: space-between;
  width: 19px;
  padding: 6px 0 5px;
  background: #2b2b2b;
}

.thumb {
  flex: 1;
  width: 11px;
  margin: 7px 0 46px;
  border-radius: 6px;
  background: #9f9f9f;
}

/* Taskbar */
.taskbar {
  flex: none;
  display: flex;
  align-items: stretch;
  height: 60px;
  border-top: 1px solid #3a4048;
  background: linear-gradient(to right, #1c232d 0, #1c232d 17%, #12215a 23%, #12205c 35%, #131f55 50%, #0e1c4c 60%, #151d38 68%, #1b212c 82%);
  color: #fff;
  font-family: "Open Sans", "Segoe UI", sans-serif;
  font-size: 14px;
  line-height: 20px;
}

.taskbar .start { width: 55px; margin: 0 5px 0 13px; }

.taskbar .search {
  width: 125px;
  height: 40px;
  margin: 9px 2px 0 0;
  gap: 7px;
  border: 1px solid #353b45;
  border-radius: 20px;
  background: #2a303a;
  font-size: 14px;
}

.pinned {
  display: grid;
  grid-template-columns: repeat(12, 55px);
}
.pinned button { position: relative; }
.pinned svg { width: 30px; height: 30px; }

.running::before {
  content: "";
  position: absolute;
  inset: 4px 5px 4px 2px;
  border: 1px solid #34436f;
  border-radius: 6px;
  background: rgba(255, 255, 255, .07);
  box-shadow: 5px 0 0 -1px #202f62;
}
.running svg { position: relative; }

.dot {
  position: absolute;
  left: 50%;
  bottom: 6px;
  width: 8px;
  height: 4px;
  margin-left: -4px;
  border-radius: 2px;
  background: #9a9eb2;
}
.live { width: 20px; margin-left: -10px; background: #4cc2ff; }

.badge {
  position: absolute;
  left: 26px;
  top: 8px;
  width: 26px;
  border-radius: 10px;
  background: #4cc2ff;
  color: #000;
  font-size: 14px;
}

.tray {
  display: grid;
  grid-template-columns: 46px 48px 108px 102px;
  margin-left: auto;
  padding-right: 6px;
}
.status { gap: 9px; }
.taskbar .lang,
.taskbar .clock { font-size: 14px; }
.taskbar .clock { justify-content: flex-end; margin-right: 18px; text-align: right; }
```
